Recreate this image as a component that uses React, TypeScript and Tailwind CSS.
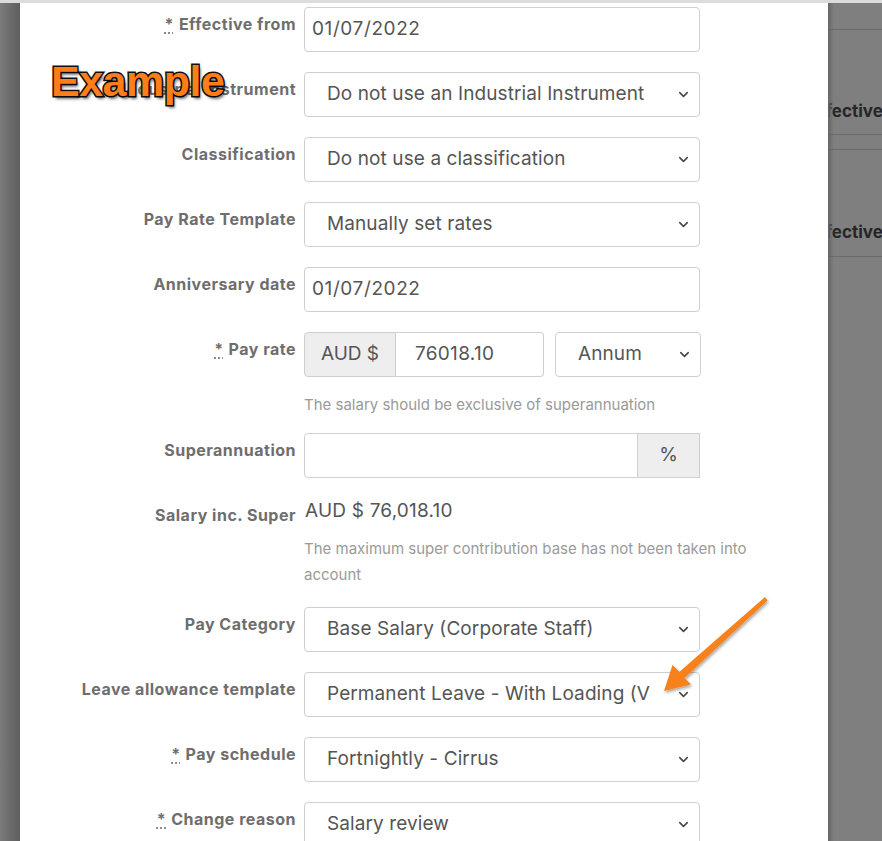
import { ChevronDown } from "lucide-react";
import type { ReactNode } from "react";

const font = { fontFamily: "Inter, 'Noto Sans', sans-serif" };

function Req() {
  return (
    <span className="underline decoration-dotted underline-offset-[3px] mr-[5px]">*</span>
  );
}

function Row({
  label,
  required,
  children,
  className = "mb-[20px]",
}: {
  label: string;
  required?: boolean;
  children: ReactNode;
  className?: string;
}) {
  return (
    <div className={`flex ${className}`}>
      <label className="w-[276px] shrink-0 text-right pt-[7px] leading-[20px] text-[16px] tracking-[0.5px] font-bold text-[#6e6e6e] whitespace-nowrap">
        {required && <Req />}
        {label}
      </label>
      <div className="ml-[8px] flex-1">{children}</div>
    </div>
  );
}

function Select({ value, width = "w-[396px]" }: { value: string; width?: string }) {
  return (
    <div
      className={`${width} h-[45px] flex items-center justify-between border border-[#cfcfcf] rounded-[4px] bg-white pl-[22px] pr-[8px]`}
    >
      <span className="text-[19px] tracking-[0.1px] text-[#555] whitespace-nowrap overflow-hidden">{value}</span>
      <ChevronDown size={15} strokeWidth={2.4} className="text-[#444] shrink-0" />
    </div>
  );
}

function TextInput({ value }: { value: string }) {
  return (
    <div className="w-[396px] h-[45px] flex items-center border border-[#cfcfcf] rounded-[4px] bg-white pl-[7px]">
      <span className="text-[19px] tracking-[0.6px] text-[#555]">{value}</span>
    </div>
  );
}

function Help({ children, className = "" }: { children: ReactNode; className?: string }) {
  return <p className={`text-[15px] leading-[26px] text-[#9a9a9a] ${className}`}>{children}</p>;
}

function Backdrop() {
  return (
    <div className="flex-1 relative overflow-hidden bg-[#7f7f7f]">
      <div className="absolute inset-y-0 left-0 w-[6px] bg-gradient-to-r from-[#666] to-transparent" />
      <div className="h-[27px] border-b border-[#6b6b6b]" />
      <div className="h-[105px] border-b border-[#6b6b6b] flex items-end pb-[10px]">
        <span className="-ml-[19px] text-[17px] font-bold text-[#262626] whitespace-nowrap">Effective</span>
      </div>
      <div className="h-[15px] border-b border-[#6b6b6b]" />
      <div className="h-[107px] border-b border-[#6b6b6b] flex items-end pb-[11px]">
        <span className="-ml-[19px] text-[17px] font-bold text-[#262626] whitespace-nowrap">Effective</span>
      </div>
    </div>
  );
}

function Arrow() {
  return (
    <svg
      className="absolute left-0 top-0 pointer-events-none"
      width="882"
      height="841"
      viewBox="0 0 882 841"
    >
      <defs>
        <filter id="arrowShadow" x="-20%" y="-20%" width="140%" height="140%">
          <feDropShadow dx="1" dy="2" stdDeviation="1.5" floodColor="#000" floodOpacity="0.35" />
        </filter>
      </defs>
      <polygon
        points="765,597 679.5,671.8 672.5,665 664,691 691,684.5 684.6,678 767.5,600.5"
        fill="#f7821f"
        filter="url(#arrowShadow)"
      />
    </svg>
  );
}

export default function App() {
  return (
    <div className="relative w-[882px] h-[841px] overflow-hidden bg-[#7f7f7f]" style={font}>
      <div className="h-[3px] bg-[#dcdcdc]" />
      <div className="flex h-[838px]">
        <div className="w-[20px] bg-gradient-to-r from-[#7b7b7b] to-[#5e5e5e]" />

        {/* modal body */}
        <div className="w-[808px] bg-white pt-[4px]">
          <Row label="Effective from" required>
            <TextInput value="01/07/2022" />
          </Row>
          <Row label="Industrial Instrument">
            <Select value="Do not use an Industrial Instrument" />
          </Row>
          <Row label="Classification">
            <Select value="Do not use a classification" />
          </Row>
          <Row label="Pay Rate Template">
            <Select value="Manually set rates" />
          </Row>
          <Row label="Anniversary date">
            <TextInput value="01/07/2022" />
          </Row>

          <Row label="Pay rate" required className="mb-[15px]">
            <div className="flex items-center">
              <div className="w-[92px] h-[45px] flex items-center justify-center border border-[#cfcfcf] rounded-l-[4px] bg-[#eeeeee] text-[19px] text-[#555]">
                AUD $
              </div>
              <div className="w-[148px] h-[45px] flex items-center border border-l-0 border-[#cfcfcf] rounded-r-[4px] pl-[19px] text-[19px] tracking-[0.3px] text-[#555]">
                76018.10
              </div>
              <div className="ml-[11px]">
                <Select value="Annum" width="w-[146px]" />
              </div>
            </div>
            <Help className="mt-[15px]">The salary should be exclusive of superannuation</Help>
          </Row>

          <Row label="Superannuation">
            <div className="flex w-[396px] h-[45px]">
              <div className="flex-1 border border-[#cfcfcf] rounded-l-[4px]" />
              <div className="w-[62px] flex items-center justify-center border border-l-0 border-[#cfcfcf] bg-[#eeeeee] text-[19px] text-[#555]">
                %
              </div>
            </div>
          </Row>

          <Row label="Salary inc. Super" className="mb-[19px]">
            <p className="text-[19px] leading-[26px] tracking-[0.2px] text-[#555] pl-[1px]">AUD $ 76,018.10</p>
            <Help className="mt-[12px] w-[470px]">
              The maximum super contribution base has not been taken into account
            </Help>
          </Row>

          <Row label="Pay Category">
            <Select value="Base Salary (Corporate Staff)" />
          </Row>
          <Row label="Leave allowance template">
            <Select value="Permanent Leave - With Loading (V" />
          </Row>
          <Row label="Pay schedule" required>
            <Select value="Fortnightly - Cirrus" />
          </Row>
          <Row label="Change reason" required>
            <Select value="Salary review" />
          </Row>
        </div>

        <Backdrop />
      </div>

      <span
        className="absolute left-[51px] top-[49px] text-[43px] font-bold text-[#ff7d1a] tracking-[-0.5px]"
        style={{
          fontFamily: "'Liberation Sans', Arial, sans-serif",
          WebkitTextStroke: "3px #111",
          paintOrder: "stroke fill",
          textShadow: "2px 3px 3px rgba(0,0,0,0.55)",
        }}
      >
        Example
      </span>

      <Arrow />
    </div>
  );
}
